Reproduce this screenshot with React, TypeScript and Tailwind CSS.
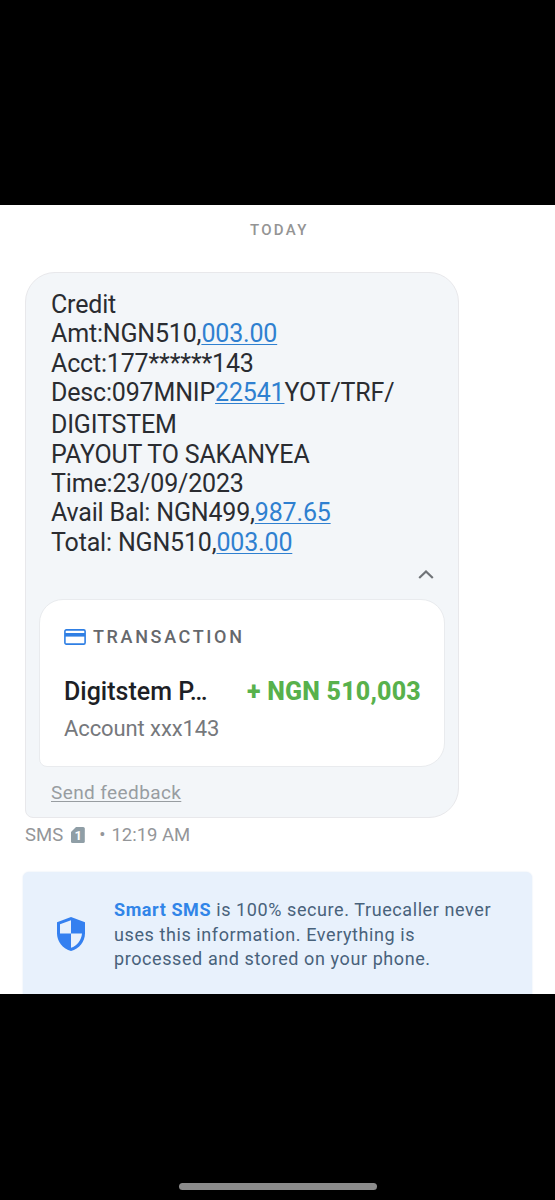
import type { ReactNode } from "react";

const Amount = ({ children }: { children: ReactNode }) => (
  <span className="text-[#2f80d0] underline decoration-[1.4px] underline-offset-2">
    {children}
  </span>
);

const CardIcon = () => (
  <svg className="block h-4 w-[22px]" viewBox="0 0 22 16" fill="none">
    <rect x="0.9" y="0.9" width="20.2" height="14.2" rx="1.4" stroke="#2f7fe4" strokeWidth="1.6" />
    <path d="M1 4h20v3.6H1z" fill="#2f7fe4" />
  </svg>
);

const SimIcon = () => (
  <span className="relative block h-4 w-3.5">
    <svg className="block h-4 w-3.5" viewBox="0 0 14 16">
      <path d="M5 0h7.2A1.6 1.6 0 0 1 13.8 1.6v12.8a1.6 1.6 0 0 1-1.6 1.6H1.6A1.6 1.6 0 0 1 0 14.4V5z" fill="#8f9ea6" />
    </svg>
    <span className="absolute inset-0 text-center text-[13px] leading-[17px] font-bold text-white">
      1
    </span>
  </span>
);

const ShieldIcon = () => (
  <svg className="block h-[34px] w-7" viewBox="0 0 28 34">
    <path d="M14 0 0 5.2v11C0 24.4 5.9 32 14 34c8.1-2 14-9.6 14-17.8v-11z" fill="#3480f0" />
    <path d="M14 3.3v13.2H3V7.3zM14 16.5h11c-.6 6.6-5 12.4-11 14.3z" fill="#e8f1fc" />
  </svg>
);

const Message = () => (
  <div className="pt-[17px] pl-[25px] text-[25px] leading-[29.35px] tracking-[-0.17px] whitespace-nowrap text-[#2a2c31]">
    <p>Credit</p>
    <p>
      Amt:NGN510,<Amount>003.00</Amount>
    </p>
    <p>Acct:177******143</p>
    <p>
      Desc:097MNIP<Amount>22541</Amount>YOT/TRF/
    </p>
    <p className="mt-[3px]">DIGITSTEM</p>
    <p>PAYOUT TO SAKANYEA</p>
    <p>Time:23/09/2023</p>
    <p>
      Avail Bal: NGN499,<Amount>987.65</Amount>
    </p>
    <p>
      Total: NGN510,<Amount>003.00</Amount>
    </p>
  </div>
);

const Transaction = () => (
  <div className="ml-[13px] h-[168px] w-[406px] rounded-3xl rounded-bl-lg border border-[#e9ebee] bg-white pt-[27px] pl-6">
    <div className="flex h-5 items-center gap-[7px]">
      <CardIcon />
      <p className="text-[18px] leading-5 font-medium tracking-[2.65px] text-[#66686c]">TRANSACTION</p>
    </div>
    <div className="mt-[31px] flex w-[357px] items-center justify-between leading-7 whitespace-nowrap">
      <p className="text-[25px] font-medium text-[#1d1f26]">Digitstem P…</p>
      <p className="text-[25px] font-extrabold tracking-[0.22px] text-[#58b14c]">+ NGN 510,003</p>
    </div>
    <p className="mt-[11px] text-[22px] leading-6 tracking-[-0.1px] text-[#76787c]">Account xxx143</p>
  </div>
);

const App = () => {
  return (
    <div className="flex h-[1200px] w-[555px] flex-col bg-black font-['Roboto',sans-serif]">
      <div className="mt-[205px] h-[789px] overflow-hidden bg-white">
        <p className="mt-[15px] ml-[250px] text-[15px] leading-5 font-medium tracking-[2.3px] text-[#949494]">
          TODAY
        </p>
        <div className="mt-8 ml-[25px] h-[546px] w-[434px] rounded-[30px] rounded-bl-lg border border-[#e8e8eb] bg-[#f3f6f9]">
          <Message />
          <div className="flex h-[42px] items-start pt-[13px] pl-[392px]">
            <svg className="block h-[9px] w-4" viewBox="0 0 16 9" fill="none">
              <path d="m1.2 8 6.8-6.5L14.8 8" stroke="#707478" strokeWidth="2.2" />
            </svg>
          </div>
          <Transaction />
          <p className="mt-3.5 ml-[25px] text-[19px] leading-6 tracking-[0.4px] text-[#989da1] underline decoration-[1.4px] underline-offset-2">
            Send feedback
          </p>
        </div>
        <div className="mt-[7px] ml-[25px] flex h-5 items-center text-[18.5px] leading-5 text-[#949699]">
          <p>SMS</p>
          <div className="ml-2">
            <SimIcon />
          </div>
          <p className="ml-3.5">•</p>
          <p className="ml-1.5">12:19 AM</p>
        </div>
        <div className="mt-[27px] ml-[23px] flex h-[140px] w-[509px] rounded-md bg-[#e8f1fc] pt-[26px] pl-[34px] shadow-[0_0_2px_#dce6f2]">
          <div className="mt-[19px]">
            <ShieldIcon />
          </div>
          <p className="ml-[29px] text-[18px] leading-[24.7px] tracking-[0.59px] whitespace-nowrap text-[#48627b]">
            <span className="font-bold text-[#3185e8]">Smart SMS</span> is 100% secure. Truecaller never
            <br />
            uses this information. Everything is
            <br />
            processed and stored on your phone.
          </p>
        </div>
      </div>
      <div className="mt-[189px] ml-[179px] h-[7px] w-[198px] rounded-full bg-[#8b8b8b]" />
    </div>
  );
};

export default App;
